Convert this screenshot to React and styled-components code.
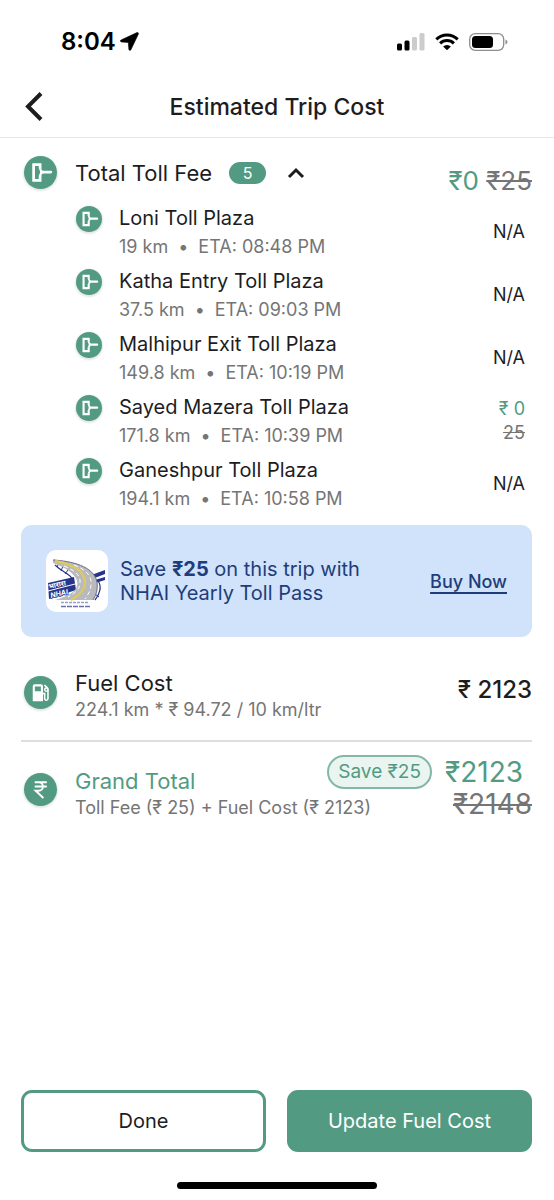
import { useState } from "react";
import styled, { createGlobalStyle } from "styled-components";

const green = "#529b82";
const navy = "#1f3d7a";
const gray = "#757575";
const ink = "#1d1d1f";

const plazas = [
  { name: "Loni Toll Plaza", distance: "19 km", eta: "08:48 PM" },
  { name: "Katha Entry Toll Plaza", distance: "37.5 km", eta: "09:03 PM" },
  { name: "Malhipur Exit Toll Plaza", distance: "149.8 km", eta: "10:19 PM" },
  {
    name: "Sayed Mazera Toll Plaza",
    distance: "171.8 km",
    eta: "10:39 PM",
    price: "₹ 0",
    oldPrice: "25",
  },
  { name: "Ganeshpur Toll Plaza", distance: "194.1 km", eta: "10:58 PM" },
];

const TollIcon = () => (
  <svg viewBox="0 0 34 34" aria-hidden="true">
    <path
      d="M16.600 12.800V8.900H9.900V25.100h6.700v-4.800"
      fill="none"
      stroke="#fff"
      strokeWidth="2.800"
    />
    <path
      d="M15.200 12.500H18v1.700l1.400.9h8.200a1.500 1.500 0 0 1 0 3h-8.200L18 19.300v1.300h-2.800l1.300-3.400v-1.500z"
      fill="#fff"
    />
  </svg>
);

const FuelIcon = () => (
  <svg viewBox="0 0 34 34" aria-hidden="true">
    <path
      d="M11 8.500h6.600a2 2 0 0 1 2 2V26H9V10.500a2 2 0 0 1 2-2zM11.200 10.700v5h6.200v-5z"
      fill="#fff"
      fillRule="evenodd"
    />
    <path
      d="M19.500 18h1.800v5.200a1.700 1.700 0 0 0 3.400 0V14.300c0-1.200-.5-1.900-1.200-2.600l-2.500-2.300"
      fill="none"
      stroke="#fff"
      strokeWidth="1.600"
    />
    <circle cx="23" cy="14" r="1.700" fill="none" stroke="#fff" strokeWidth="1.500" />
  </svg>
);

const RupeeIcon = () => (
  <svg viewBox="0 0 34 34" aria-hidden="true">
    <path
      d="M11 9.500h12.500M11 14h12.500M11 9.500h4c6 0 6 8.800 0 8.800h-3l8 7.500"
      fill="none"
      stroke="#fff"
      strokeWidth="2"
    />
  </svg>
);

const NhaiLogo = () => (
  <svg viewBox="0 0 62 62" role="img" aria-label="NHAI">
    <path d="M40 27l19-7v4l-18 7z" fill="#27348b" />
    <path d="M42 32l17-5v3l-16 5z" fill="#27348b" />
    <path d="M2 33l26-6 2 13-27 9z" fill="#27348b" />
    <path d="M2 41l27-7" stroke="#fff" strokeWidth="1" />
    <path
      d="M8 10c9 7 20 10 23 18M9 15c8 8 15 8 18 15M49 50c5-6 7-14 3-19"
      fill="none"
      stroke="#27348b"
      strokeWidth="1.200"
    />
    <path d="M13 13l-2 4M17 16l-2 5M22 20l-3 4M49 44l4 3" stroke="#27348b" strokeWidth="1" />
    <path
      d="M7 10c18 1 41 6 44 22 1 8-1 13-4 18H9c14-4 24-9 22-19C29 23 18 17 7 13z"
      fill="#b9babd"
    />
    <path
      d="M7 10c18 1 41 6 44 22 1 8-1 13-4 18"
      fill="none"
      stroke="#6b6d86"
      strokeWidth="1"
    />
    <path d="M9 11c17 3 30 10 30 22 0 8-7 13-14 17" fill="none" stroke="#dcc966" strokeWidth="2.400" />
    <path
      d="M18 16c10 4 17 9 16 17 0 6-5 10-12 14M28 15c11 4 18 11 17 19 0 6-3 11-6 15"
      fill="none"
      stroke="#fff"
      strokeWidth="1"
      strokeDasharray="4 3"
    />
    <text x="3" y="39" fontSize="7" fontWeight="700" fill="#fff" transform="rotate(-13 3 39)">
      भारारा
    </text>
    <text
      x="5"
      y="48"
      fontSize="7"
      fontWeight="700"
      fontStyle="italic"
      fill="#fff"
      stroke="#27348b"
      strokeWidth="1.500"
      paintOrder="stroke"
      transform="rotate(-13 5 48)"
    >
      NHAI
    </text>
    <path d="M15 52.500h28" stroke="#9aa0c4" strokeWidth="1.500" strokeDasharray="3 1" />
    <path d="M15 56.500h29" stroke="#6871a8" strokeWidth="1.500" strokeDasharray="5 1" />
  </svg>
);

export default function App() {
  const [open, setOpen] = useState(true);

  return (
    <>
      <GlobalStyle />
      <Screen>
        <StatusBar>
          <Clock>
            8:04
            <svg width="19" height="19" viewBox="0 0 19 19" aria-hidden="true">
              <path
                d="M17 .6L1 8q-1.600 1.300.4 1.900l6.900.6.6 7.100q.8 1.900 2 .2L18.400 2q.2-1.700-1.400-1.400z"
                fill="#000"
                stroke="#000"
                strokeWidth=".6"
              />
            </svg>
          </Clock>
          <StatusIcons>
            <svg width="28" height="18" viewBox="0 0 28 18" aria-hidden="true">
              <rect x="0" y="10.500" width="5" height="7" rx="1.500" />
              <rect x="7.500" y="7.500" width="5" height="10" rx="1.500" />
              <rect x="15" y="4" width="5" height="13.500" rx="1.500" fill="#ccc" />
              <rect x="22.500" y="0" width="5" height="17.500" rx="1.500" fill="#ccc" />
            </svg>
            <svg width="24" height="18" viewBox="0 0 24 18" aria-hidden="true">
              <path
                d="M1.300 6.400a15.400 15.400 0 0 1 21.400 0M5.100 10.300a9.900 9.900 0 0 1 13.800 0"
                fill="none"
                stroke="#000"
                strokeWidth="3"
              />
              <path d="M12 17.300l-3.900-3.800a5.500 5.500 0 0 1 7.800 0z" />
            </svg>
            <svg width="39" height="18" viewBox="0 0 39 18" aria-hidden="true">
              <rect x=".7" y=".7" width="34" height="16.600" rx="5.500" fill="none" stroke="#8e8e8e" strokeWidth="1.300" />
              <rect x="3" y="3" width="21" height="12" rx="3.500" />
              <path d="M36.500 6.500q2 .8 2 2.500t-2 2.500z" fill="#8e8e8e" />
            </svg>
          </StatusIcons>
        </StatusBar>

        <Header>
          <BackButton aria-label="Back">
            <svg width="20" height="30" viewBox="0 0 20 30" aria-hidden="true">
              <path d="M17 1.500L4 14.500l13 13" fill="none" stroke={ink} strokeWidth="4" />
            </svg>
          </BackButton>
          <Title>Estimated Trip Cost</Title>
        </Header>

        <Content>
          <TollSummary>
            <TollToggle aria-expanded={open} onClick={() => setOpen(!open)}>
              <Badge>
                <TollIcon />
              </Badge>
              Total Toll Fee
              <Count>{plazas.length}</Count>
              <Chevron $open={open} width="18" height="12" viewBox="0 0 18 12" aria-hidden="true">
                <path d="M2 10l7-7 7 7" fill="none" stroke={ink} strokeWidth="3" />
              </Chevron>
            </TollToggle>
            <TollPrice>
              ₹0 <s>₹25</s>
            </TollPrice>
          </TollSummary>

          {open && (
            <PlazaList>
              {plazas.map((plaza) => (
                <Plaza key={plaza.name}>
                  <Badge $small>
                    <TollIcon />
                  </Badge>
                  <PlazaText>
                    <PlazaName>{plaza.name}</PlazaName>
                    <PlazaMeta>
                      <span>{plaza.distance}</span>
                      <span>•</span>
                      <span>ETA: {plaza.eta}</span>
                    </PlazaMeta>
                  </PlazaText>
                  <PlazaPrice $paid={plaza.price}>
                    {plaza.price || "N/A"}
                    {plaza.oldPrice && <s>{plaza.oldPrice}</s>}
                  </PlazaPrice>
                </Plaza>
              ))}
            </PlazaList>
          )}

          <Banner>
            <Logo>
              <NhaiLogo />
            </Logo>
            <BannerText>
              Save <b>₹25</b> on this trip with
              <br />
              NHAI Yearly Toll Pass
            </BannerText>
            <BuyLink href="#buy">Buy Now</BuyLink>
          </Banner>

          <FuelRow>
            <Badge>
              <FuelIcon />
            </Badge>
            <CostText>
              <CostTitle>Fuel Cost</CostTitle>
              <CostDetail>224.1 km * ₹ 94.72 / 10 km/ltr</CostDetail>
            </CostText>
            <FuelPrice>₹ 2123</FuelPrice>
          </FuelRow>

          <TotalRow>
            <Badge>
              <RupeeIcon />
            </Badge>
            <CostText>
              <CostTitle $green>Grand Total</CostTitle>
              <CostDetail>Toll Fee (₹ 25) + Fuel Cost (₹ 2123)</CostDetail>
            </CostText>
            <TotalPrice>
              <TotalNow>
                <SavePill>Save ₹25</SavePill>
                ₹2123
              </TotalNow>
              <s>₹2148</s>
            </TotalPrice>
          </TotalRow>
        </Content>

        <Actions>
          <ActionButton>Done</ActionButton>
          <ActionButton $primary>Update Fuel Cost</ActionButton>
        </Actions>
        <HomeIndicator />
      </Screen>
    </>
  );
}

const GlobalStyle = createGlobalStyle`
  * {
    box-sizing: border-box;
  }
  body {
    margin: 0;
    background: #fff;
    color: ${ink};
    font-family: Inter, "Noto Sans", sans-serif;
  }
  button {
    font: inherit;
    color: inherit;
    cursor: pointer;
  }
  svg {
    display: block;
    flex: none;
  }
`;

const Screen = styled.div`
  display: flex;
  flex-direction: column;
  min-height: 100vh;
`;

const StatusBar = styled.div`
  display: flex;
  align-items: center;
  justify-content: space-between;
  padding: 26px 46px 19px 61px;
`;

const Clock = styled.div`
  display: flex;
  align-items: center;
  gap: 4px;
  color: #000;
  font-size: 24px;
  font-weight: 600;
  line-height: 31px;
`;

const StatusIcons = styled.div`
  display: flex;
  align-items: center;
  gap: 10px;
`;

const Header = styled.header`
  display: grid;
  grid-template-columns: 1fr auto 1fr;
  align-items: center;
  height: 62px;
  padding: 0 24px;
  border-bottom: 1px solid #e8e8e8;
`;

const BackButton = styled.button`
  justify-self: start;
  padding: 0;
  border: 0;
  background: none;
`;

const Title = styled.h1`
  margin: 0;
  font-size: 23px;
  font-weight: 500;
  line-height: 30px;
`;

const Content = styled.main`
  flex: 1;
  padding: 18px 22px 18px 21px;
`;

const Badge = styled.span`
  flex: none;
  width: ${({ $small }) => ($small ? 26 : 33)}px;
  height: ${({ $small }) => ($small ? 26 : 33)}px;
  border-radius: 50%;
  background: ${green};
  box-shadow: 0 1px 2px 1px rgba(0, 0, 0, 0.1);
`;

const TollSummary = styled.div`
  display: flex;
  justify-content: space-between;
  height: 40px;
`;

const TollToggle = styled.button`
  display: flex;
  align-items: center;
  align-self: flex-start;
  height: 33px;
  padding: 0 0 0 3px;
  border: 0;
  background: none;
  font-size: 22px;

  ${Badge} {
    margin-right: 18px;
  }
`;

const Count = styled.span`
  width: 37px;
  margin: 0 21px 0 17px;
  border-radius: 11px;
  background: ${green};
  color: #fff;
  font-size: 16px;
  line-height: 22px;
  text-align: center;
`;

const Chevron = styled.svg`
  transform: ${({ $open }) => ($open ? "none" : "rotate(180deg)")};
`;

const TollPrice = styled.div`
  align-self: flex-end;
  color: ${green};
  font-size: 26px;
  line-height: 30px;

  s {
    color: ${gray};
  }
`;

const PlazaList = styled.ul`
  display: flex;
  flex-direction: column;
  gap: 5px;
  margin: 7px 0 12px;
  padding: 0 7px 0 55px;
  list-style: none;
`;

const Plaza = styled.li`
  display: flex;
  align-items: center;
  gap: 17px;

  ${Badge} {
    align-self: flex-start;
    margin-top: 3px;
  }
`;

const PlazaText = styled.div`
  flex: 1;
`;

const PlazaName = styled.div`
  font-size: 20px;
  line-height: 30px;
`;

const PlazaMeta = styled.div`
  display: flex;
  gap: 10px;
  color: ${gray};
  font-size: 18px;
  line-height: 28px;
`;

const PlazaPrice = styled.div`
  display: flex;
  flex-direction: column;
  align-items: flex-end;
  color: ${({ $paid }) => ($paid ? green : ink)};
  font-size: 18px;
  line-height: 24px;

  s {
    color: ${gray};
  }
`;

const Banner = styled.section`
  display: flex;
  align-items: center;
  gap: 12px;
  min-height: 112px;
  padding: 0 25px;
  border-radius: 11px;
  background: #d0e3fa;
  color: ${navy};
`;

const Logo = styled.div`
  width: 62px;
  height: 62px;
  border-radius: 10px;
  background: #fff;
  overflow: hidden;
`;

const BannerText = styled.p`
  flex: 1;
  margin: 0;
  font-size: 20px;
  line-height: 24px;
`;

const BuyLink = styled.a`
  color: inherit;
  font-size: 18px;
  font-weight: 500;
  text-underline-offset: 4px;
  text-decoration-thickness: 2px;
`;

const CostRow = styled.section`
  display: flex;
  align-items: flex-start;
  gap: 18px;
  padding-left: 3px;
`;

const FuelRow = styled(CostRow)`
  padding-top: 31px;
  padding-bottom: 18px;
  border-bottom: 2px solid #dedede;

  ${Badge} {
    margin-top: 8px;
  }
`;

const TotalRow = styled(CostRow)`
  padding-top: 13px;

  ${Badge} {
    margin-top: 18px;
  }
`;

const CostText = styled.div`
  flex: 1;
  min-width: 0;
  white-space: nowrap;

  ${TotalRow} & {
    padding-top: 11px;
  }
`;

const CostTitle = styled.h2`
  margin: 0;
  color: ${({ $green }) => ($green ? green : ink)};
  font-size: 22px;
  font-weight: 400;
  line-height: 30px;
`;

const CostDetail = styled.p`
  margin: 0;
  color: ${gray};
  font-size: 18px;
  line-height: 24px;
`;

const FuelPrice = styled.div`
  padding-top: 7px;
  font-size: 24px;
  font-weight: 500;
  line-height: 30px;
`;

const TotalPrice = styled.div`
  display: flex;
  flex-direction: column;
  align-items: flex-end;
  font-size: 28px;
  line-height: 31px;

  s {
    color: ${gray};
  }
`;

const TotalNow = styled.div`
  display: flex;
  align-items: center;
  gap: 13px;
  padding-right: 9px;
  color: ${green};
`;

const SavePill = styled.span`
  padding: 0 9px;
  border: 2px solid #82b8a5;
  border-radius: 17px;
  background: #eaf4f1;
  font-size: 19px;
  line-height: 30px;
`;

const Actions = styled.footer`
  display: grid;
  grid-template-columns: 1fr 1fr;
  gap: 21px;
  padding: 0 22px 0 21px;
`;

const ActionButton = styled.button`
  height: 62px;
  border: 3px solid ${green};
  border-radius: 11px;
  background: ${({ $primary }) => ($primary ? green : "#fff")};
  color: ${({ $primary }) => ($primary ? "#fff" : ink)};
  font-size: 20px;
`;

const HomeIndicator = styled.div`
  width: 36%;
  height: 7px;
  margin: 30px auto 11px;
  border-radius: 4px;
  background: #000;
`;
